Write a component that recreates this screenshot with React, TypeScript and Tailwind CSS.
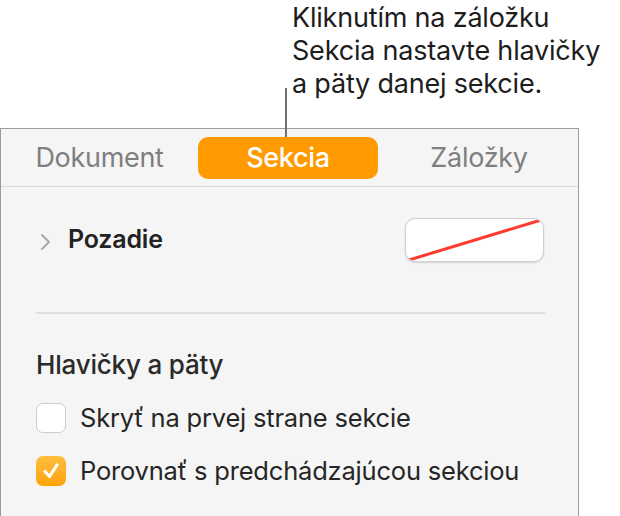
const App = () => {
  return (
    <div className="w-[620px] h-[516px] bg-white overflow-hidden relative" style={{ fontFamily: 'Inter, "Noto Sans", sans-serif' }}>
      {/* callout */}
      <div className="pl-[292px] pt-[1px] text-[27px] leading-[33px] text-[#1d1d1d] tracking-[-0.2px]">
        <p>Kliknutím na záložku</p>
        <p>Sekcia nastavte hlavičky</p>
        <p>a päty danej sekcie.</p>
      </div>
      <div className="absolute left-[285px] top-[88px] w-[1.5px] h-[49px] bg-[#6f6f6f] z-10" />

      {/* inspector panel */}
      <div className="mt-[28px] w-[579px] h-[400px] border border-[#9c9c9c] border-b-0 bg-[#f5f5f5]">
        <div className="flex items-center h-[58px] border-b border-[#dadada]">
          <div className="w-[197px] text-center text-[27px] text-[#7f7f7f] tracking-[-0.3px] pt-[2px]">Dokument</div>
          <div className="w-[180px] h-[42px] rounded-[10px] bg-[#ff9a00] text-white text-[27px] font-medium flex items-center justify-center tracking-[-0.3px] pt-[2px]">
            Sekcia
          </div>
          <div className="flex-1 text-center text-[27px] text-[#7f7f7f] tracking-[-0.3px] pl-[2px] pt-[2px]">Záložky</div>
        </div>

        <div className="flex items-center justify-between pl-[38px] pr-[34px] pt-[31px]">
          <div className="flex items-center gap-[17px]">
            <svg width="12" height="18" viewBox="0 0 12 18" className="mt-[3px]">
              <polyline points="3,2 10,9 3,16" fill="none" stroke="#a9a9a9" strokeWidth="2" strokeLinecap="round" strokeLinejoin="round" />
            </svg>
            <span className="text-[25px] font-semibold text-[#222] tracking-[-0.2px]">Pozadie</span>
          </div>
          <div className="w-[139px] h-[44px] rounded-[10px] bg-white border border-[#cfcfcf] shadow-[0_1px_2px_rgba(0,0,0,0.14)] overflow-hidden">
            <svg width="139" height="44" viewBox="0 0 139 44">
              <line x1="3" y1="41" x2="135" y2="1" stroke="#ff3b30" strokeWidth="3" />
            </svg>
          </div>
        </div>

        <div className="ml-[35px] mr-[33px] mt-[50px] h-[2px] bg-[#dedede]" />

        <div className="pl-[35px] pt-[35px]">
          <div className="text-[26px] font-medium text-[#2a2a2a] tracking-[-0.2px] leading-[32px]">Hlavičky a päty</div>
          <div className="flex items-center gap-[14px] mt-[22px]">
            <div className="w-[30px] h-[30px] rounded-[7px] bg-white border border-[#cdcdcd]" />
            <span className="text-[25.5px] leading-[30px] text-[#262626] tracking-[-0.2px]">Skryť na prvej strane sekcie</span>
          </div>
          <div className="flex items-center gap-[14px] mt-[23px]">
            <div className="w-[30px] h-[30px] rounded-[7px] bg-gradient-to-b from-[#ffbe3c] to-[#ffa300] flex items-center justify-center">
              <svg width="20" height="20" viewBox="0 0 20 20">
                <polyline points="4,10.5 8.5,15.5 16,4" fill="none" stroke="white" strokeWidth="3.2" strokeLinecap="round" strokeLinejoin="round" />
              </svg>
            </div>
            <span className="text-[25.5px] leading-[30px] text-[#262626] tracking-[-0.2px]">Porovnať s predchádzajúcou sekciou</span>
          </div>
        </div>
      </div>
    </div>
  )
}

export default App
